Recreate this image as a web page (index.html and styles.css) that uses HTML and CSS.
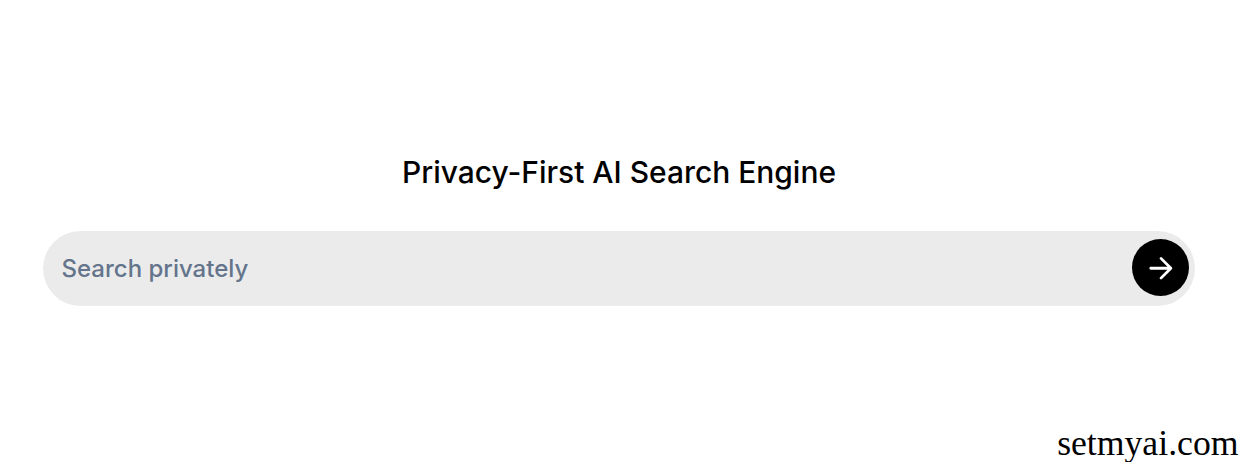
FILE: index.html
```html
<!DOCTYPE html>
<html lang="en">
<head>
    <meta charset="UTF-8">
    <meta name="viewport" content="width=device-width, initial-scale=1.0">
    <title>Privacy-First AI Search Engine</title>
    <link rel="stylesheet" href="styles.css">
</head>
<body>
    <main class="container">
        <h1>Privacy-First AI Search Engine</h1>

        <form class="search-box">
            <input type="text" class="search-input" placeholder="Search privately" aria-label="Search">
            <button type="submit" class="btn" aria-label="Submit">
                <svg width="30" height="30" viewBox="0 0 24 24" fill="none" stroke="currentColor" stroke-width="2.2" stroke-linecap="round" stroke-linejoin="round">
                    <path d="M3.8 12.2h16.1M12 4.3l7.9 7.9-7.9 7.9"/>
                </svg>
            </button>
        </form>
    </main>

    <footer class="site-name">setmyai.com</footer>
</body>
</html>
```

FILE: styles.css
```css
* { box-sizing: border-box; }
body { display: flex; flex-direction: column; height: 462px; margin: 0; background-color: #fff; color: #000; font-family: Inter, sans-serif; overflow: hidden; }
.container { flex: 1; padding: 152px 44px 0 43px; }
h1 { margin: 0 0 39px; font-size: 29.95px; font-weight: 500; line-height: 40px; text-align: center; }

/* Search bar */
.search-box { display: flex; align-items: center; height: 75px; padding: 0 6px 0 18.5px; background-color: #ebebeb; border-radius: 38px; }
.search-input { flex: 1; min-width: 0; padding: 0; border: none; outline: none; background: none; font-family: inherit; font-size: 24px; font-weight: 500; line-height: 36px; }
.search-input::placeholder { color: #64748b; opacity: 1; }
.btn { display: flex; align-items: center; justify-content: center; width: 57px; height: 57px; margin-bottom: 1.4px; padding: 0; border: none; border-radius: 50%; background-color: #000; color: #fff; cursor: pointer; }

.site-name { padding-right: .5px; font-family: "Liberation Serif", serif; font-size: 35.7px; line-height: 38px; text-align: right; }
```
